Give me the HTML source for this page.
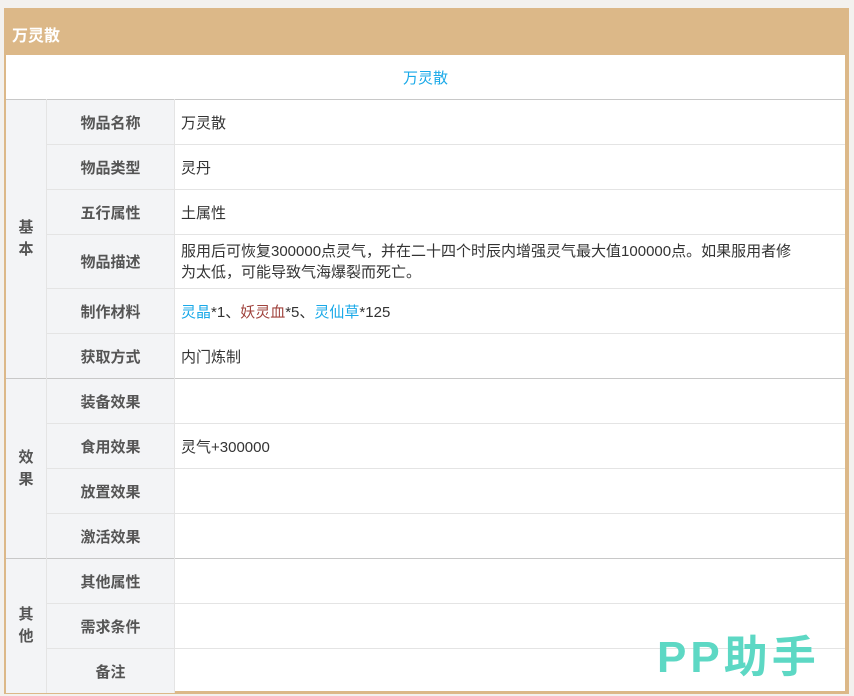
<!DOCTYPE html><html><head><meta charset="utf-8"><style>
body{margin:0;width:854px;height:696px;background:#f3f1ee;font-family:"Liberation Sans","Noto Sans CJK SC",sans-serif;position:relative;overflow:hidden}
.box{position:absolute;left:4px;top:8px;width:845px;height:686px;background:#dcb888;}
.hd{position:absolute;left:12px;top:22px;color:#fff;font-weight:bold;font-size:16px}
.in{position:absolute;left:6px;top:55px;width:839px;height:636px;background:#fff}
table{border-collapse:collapse;width:839px;font-size:15px;color:#333}
td{border-top:1px solid #e4e4e4;padding:0 0 0 6px;height:44px}
td.g{background:#f3f4f6;width:40px;padding:0;text-align:center;font-weight:bold;color:#555;border-right:1px solid #e4e4e4;line-height:22px}
td.l{background:#f3f4f6;width:127px;padding:0;text-align:center;font-weight:bold;color:#555;border-right:1px solid #e4e4e4}
tr.s td{border-top:1px solid #c8c8c8}
.t{height:44px;text-align:center;color:#1aa9e8;line-height:48px;font-size:15px}
.b{color:#1aa9e8}.r{color:#a0433d}
.pp{position:absolute;left:657px;top:621px;font-size:44px;font-weight:bold;color:#5dd8c4;letter-spacing:4px}
</style></head><body>
<div class="box"></div><div class="hd">万灵散</div>
<div class="in"><div class="t">万灵散</div>
<table>
<tr class="s"><td class="g" rowspan="6">基<br>本</td><td class="l">物品名称</td><td>万灵散</td></tr>
<tr><td class="l">物品类型</td><td>灵丹</td></tr>
<tr><td class="l">五行属性</td><td>土属性</td></tr>
<tr><td class="l" style="height:53px">物品描述</td><td style="line-height:21px;padding-right:36px">服用后可恢复300000点灵气，并在二十四个时辰内增强灵气最大值100000点。如果服用者修<br>为太低，可能导致气海爆裂而死亡。</td></tr>
<tr><td class="l">制作材料</td><td><span class="b">灵晶</span>*1、<span class="r">妖灵血</span>*5、<span class="b">灵仙草</span>*125</td></tr>
<tr><td class="l">获取方式</td><td>内门炼制</td></tr>
<tr class="s"><td class="g" rowspan="4">效<br>果</td><td class="l">装备效果</td><td></td></tr>
<tr><td class="l">食用效果</td><td>灵气+300000</td></tr>
<tr><td class="l">放置效果</td><td></td></tr>
<tr><td class="l">激活效果</td><td></td></tr>
<tr class="s"><td class="g" rowspan="3">其<br>他</td><td class="l">其他属性</td><td></td></tr>
<tr><td class="l">需求条件</td><td></td></tr>
<tr><td class="l">备注</td><td></td></tr>
</table></div>
<div class="pp">PP助手</div>
</body></html>
